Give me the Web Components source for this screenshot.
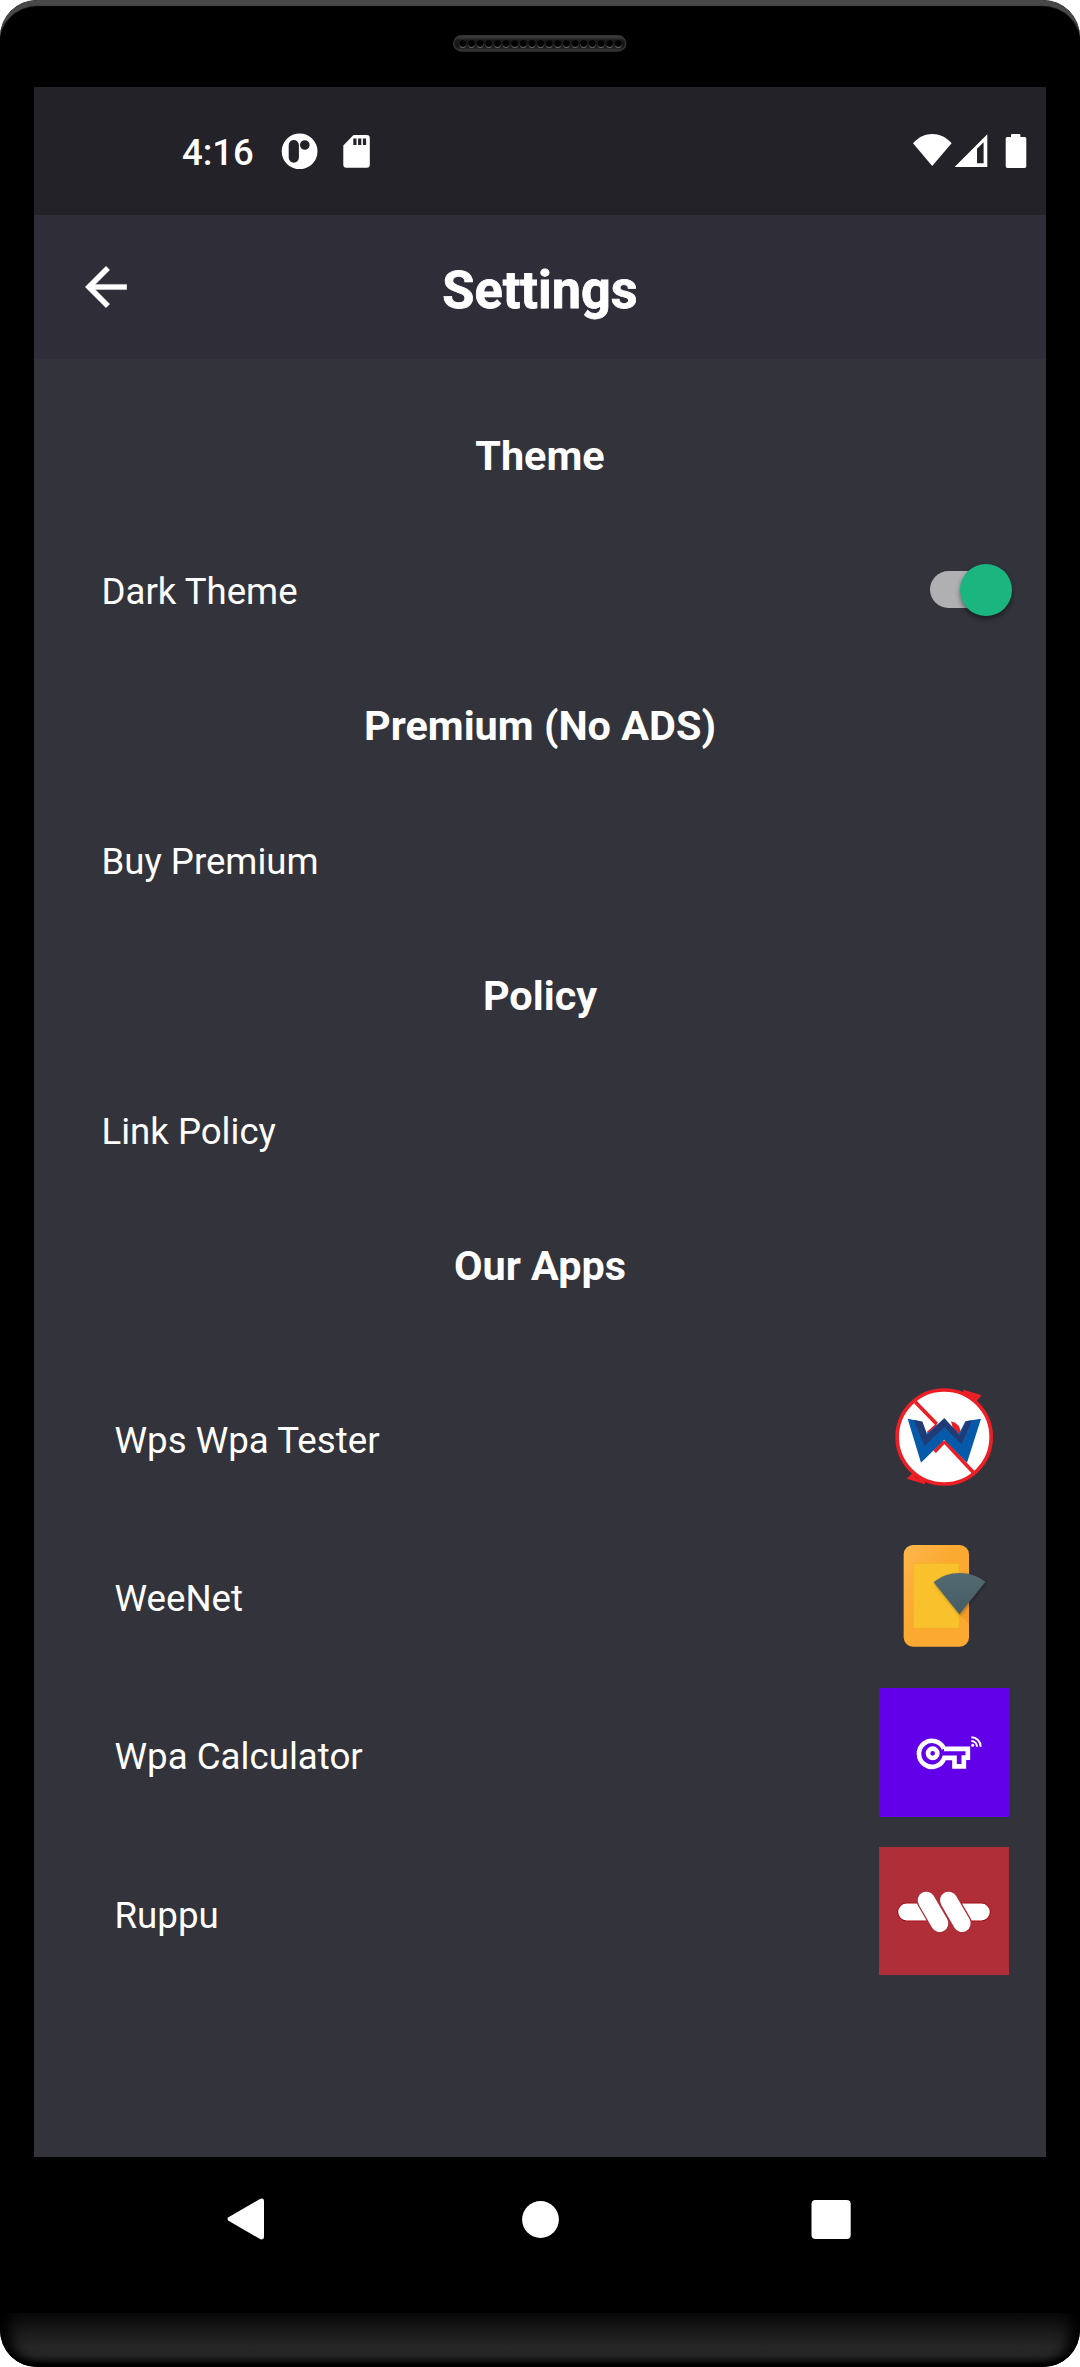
<!DOCTYPE html>
<html lang="en">
<head>
<meta charset="utf-8">
<title>Settings</title>
<style>
html,body{margin:0;padding:0;background:#fff}
body{font-family:Roboto,"Liberation Sans",sans-serif;color:#fff}
</style>
</head>
<body>
<phone-frame>
  <status-bar time="4:16"></status-bar>
  <app-bar>Settings</app-bar>
  <settings-list>
    <section-title>Theme</section-title>
    <setting-row>Dark Theme<toggle-switch slot="end"></toggle-switch></setting-row>
    <section-title>Premium (No ADS)</section-title>
    <setting-row>Buy Premium</setting-row>
    <section-title>Policy</section-title>
    <setting-row>Link Policy</setting-row>
    <section-title>Our Apps</section-title>
    <app-row icon="wps">Wps Wpa Tester</app-row>
    <app-row icon="weenet">WeeNet</app-row>
    <app-row icon="key">Wpa Calculator</app-row>
    <app-row icon="ruppu">Ruppu</app-row>
  </settings-list>
  <nav-bar slot="nav"></nav-bar>
</phone-frame>
<script>
const define=(name,html)=>customElements.define(name,class extends HTMLElement{
  constructor(){
    super();
    const root=this.attachShadow({mode:'open'});
    root.innerHTML=typeof html==='function'?html(this):html;
  }
});

const holes=Array.from({length:19},(_,i)=>{
  const x=(9.9+i*8.63).toFixed(2);
  return `<circle cx="${x}" cy="9.3" r="3.7" fill="url(#rim)"/><circle cx="${x}" cy="8.6" r="3.3" fill="#000"/>`;
}).join('');

define('phone-frame',`
<style>
:host{display:flex;flex-direction:column;width:1080px;height:2367px;background:#000;border-radius:37px;overflow:hidden}
.top{height:87px;flex:none;display:flex;justify-content:center;box-sizing:border-box;padding-top:35px;
 border-radius:37px 37px 0 0;box-shadow:inset 0 7px 1px -1px #484848}
.top svg{display:block}
.screen{height:2070px;flex:none;margin:0 34px;background:#33333c;display:flex;flex-direction:column}
.nav{height:155.7px;flex:none}
.chin{flex:1;border-radius:0 0 37px 37px;background:linear-gradient(#0c0c0c 0%,#111 18%,#1c1c1c 40%,#262626 62%,#252525 78%,#151515 90%,#000 98%);
 box-shadow:inset 16px 0 14px -6px #000,inset -16px 0 14px -6px #000,inset 0 -5px 5px -2px #000}
</style>
<div class="top"><svg width="174" height="17" viewBox="0 0 174 17">
<defs><linearGradient id="sp" x1="0" y1="0" x2="0" y2="1"><stop offset="0" stop-color="#4a4a4a"/><stop offset=".3" stop-color="#1a1a1a"/><stop offset=".7" stop-color="#151515"/><stop offset="1" stop-color="#3a3a3a"/></linearGradient>
<linearGradient id="rim" x1="0" y1="0" x2="0" y2="1"><stop offset=".3" stop-color="#1a1a1a"/><stop offset="1" stop-color="#6c6c6c"/></linearGradient></defs>
<rect x=".7" y=".7" width="172" height="15.4" rx="7.7" fill="url(#sp)" stroke="#333" stroke-width="1.4"/>${holes}</svg></div>
<div class="screen"><slot></slot></div>
<div class="nav"><slot name="nav"></slot></div>
<div class="chin"></div>`);

define('status-bar',el=>`
<style>
:host{display:flex;height:127.5px;flex:none;background:#232228;box-sizing:border-box;padding:0 19px 0 148px;align-items:flex-start}
span{font-size:36.5px;font-weight:500;line-height:44px;margin-top:44px;width:96px;white-space:nowrap}
svg{display:block;margin-top:46px;fill:#fff}
.r{margin-left:auto}
</style>
<span>${el.getAttribute('time')}</span>
<svg style="margin-left:2px" width="92" height="36" viewBox="280 133 92 36">
<path fill-rule="evenodd" d="M281.7 151.3a17.9 17.9 0 1 0 35.8 0a17.9 17.9 0 1 0-35.8 0zM293.8 140a5.1 5.1 0 0 1 5.1 5.1v12.5a5.1 5.1 0 0 1-10.2 0v-12.5a5.1 5.1 0 0 1 5.1-5.1zM300 145a4.8 4.8 0 1 0 9.6 0a4.8 4.8 0 1 0-9.6 0z"/>
<path fill-rule="evenodd" d="M353.5 135h13.3a3 3 0 0 1 3 3v26.7a3 3 0 0 1-3 3h-20.5a3 3 0 0 1-3-3V145.4zM353.3 138.4v6.5h3.2v-6.5zM358.1 138.4v6.5h3.2v-6.5zM362.9 138.4v6.5h3.2v-6.5z"/></svg>
<svg class="r" width="115" height="36" viewBox="912 133 115 36">
<path d="M932.2 166L913 143.2C924 131 940.5 131 951.6 143.2z"/>
<path fill-rule="evenodd" d="M954.6 167L987.3 134.3V167zM977 148.7V163.2H983.6V142.2z"/>
<path d="M1011 137v-2a1 1 0 0 1 1-1h7.4a1 1 0 0 1 1 1v2h4.3a1.6 1.6 0 0 1 1.6 1.6v27.6a1.8 1.8 0 0 1-1.8 1.8h-17a1.8 1.8 0 0 1-1.8-1.8v-27.6a1.6 1.6 0 0 1 1.6-1.6z"/></svg>`);

define('app-bar',`
<style>
:host{display:grid;grid-template-columns:100px 1fr 100px;height:144.5px;flex:none;background:#2e2d38}
svg{display:block;margin:51px 0 0 51px}
h1{margin:44px 0 0;font-size:52.2px;line-height:64px;font-weight:700;text-align:center;-webkit-text-stroke:.8px #fff}
</style>
<svg width="42" height="42" viewBox="3.9 4 16.2 16" fill="#fff" stroke="#fff" stroke-width=".15"><path d="M20 11H7.83l5.59-5.59L12 4l-8 8 8 8 1.41-1.41L7.83 13H20v-2z"/></svg>
<h1><slot></slot></h1>`);

define('settings-list',`<style>:host{display:flex;flex-direction:column;padding-top:30px}</style><slot></slot>`);
define('section-title',`
<style>:host{display:block;height:135px;line-height:135px;font-size:41.4px;font-weight:700;text-align:center;white-space:nowrap}</style><slot></slot>`);
define('setting-row',`
<style>:host{display:flex;align-items:center;justify-content:space-between;height:134.9px;padding:0 34px 0 67.5px;font-size:36.6px;white-space:nowrap}</style><slot></slot><slot name="end"></slot>`);
define('toggle-switch',`
<style>
:host{display:flex;align-items:center;justify-content:flex-end;width:82.5px;height:37px;box-sizing:border-box;border-radius:19px;background:linear-gradient(90deg,#b0b0b2 70%,transparent 70%);margin-top:-3px}
i{display:block;flex:none;width:52px;height:52px;border-radius:50%;background:#1bb680;box-shadow:0 3px 5px rgba(0,0,0,.45)}
</style><i></i>`);

const icons={
wps:`<svg width="130" height="129" viewBox="27 5 390 387">
<circle cx="222.5" cy="200" r="141" fill="#fff" stroke="#ed1f24" stroke-width="11"/>
<path d="M280 58L335 75L317 94L303 90L309 82L280 72zM165 342L110 325L128 308L140 311L134 320L165 331z" fill="#ed1f24"/>
<path d="M136 95L200 161M222 212L311 307M222 214L194 244" fill="none" stroke="#ed1f24" stroke-width="11"/>
<path d="M200 158L171 184L174 195H200zM243 153Q272 158 273 195L250 180z" fill="#ed1f24"/>
<path d="M113 145L157 154L171 190L223 144L267 190L286 153L333 145L291 277L223 208L153 277z" fill="#075aa9"/>
<path d="M131 148L157 154L171 196L223 144L269 196L289 153L306 150L275 222L223 170L164 227z" fill="#203b75"/>
</svg>`,
weenet:`<svg width="130" height="129" viewBox="27 -1 390 387">
<defs><linearGradient id="o" x1="0" y1="0" x2=".6" y2=".6"><stop stop-color="#ffb74d"/><stop offset=".7" stop-color="#fba930"/></linearGradient><linearGradient id="g" x1="0" y1="0" x2="0" y2="1"><stop stop-color="#546a72"/><stop offset="1" stop-color="#455c65"/></linearGradient></defs>
<rect x="101" y="44" width="196" height="305" rx="28" fill="url(#o)"/>
<rect x="131" y="100" width="136" height="193" fill="#f9c22c" stroke="#f2b52b" stroke-width="2"/>
<path d="M268 252L297 219V281z" fill="#ee9828" opacity=".7"/>
<path d="M268 252L191 156C235 119 302 119 346 155z" fill="url(#g)" style="filter:drop-shadow(2px 4px 4px rgba(0,0,0,.3))"/>
</svg>`,
key:`<svg width="130" height="129" viewBox="27 23 390 387">
<rect x="27" y="23" width="390" height="387" fill="#6200ea"/>
<g fill="none" stroke="#fff" stroke-width="14">
<path d="M222 205.5H293.5V232H281.5V258H253.5V232.5H223A39 39 0 1 1 222 205.5"/><circle cx="188" cy="219" r="14"/>
<g stroke-width="6"><path d="M304 171A28 28 0 0 1 332 199"/><path d="M304 182A17 17 0 0 1 321 199"/></g></g><circle cx="308" cy="195" r="4.5" fill="#fff"/>
</svg>`,
ruppu:`<svg width="130" height="128" viewBox="27 34 390 384">
<rect x="27" y="34" width="390" height="384" fill="#af2e38"/>
<g stroke-linecap="round" fill="none"><path d="M110 229H334" stroke="#a00008" stroke-width="56"/><path d="M110 229H334" stroke="#fff" stroke-width="51"/>
<g stroke="#af2e38" stroke-width="60"><path d="M169 194L209 263M236 194L276 263"/></g>
<g stroke="#fff" stroke-width="52"><path d="M169 194L209 263M236 194L276 263"/></g></g>
</svg>`};

define('app-row',el=>`
<style>:host{display:flex;align-items:center;justify-content:space-between;height:158.1px;box-sizing:border-box;padding:0 37px 0 80.5px;font-size:36.7px;white-space:nowrap}
:host(:first-of-type){margin-top:24px}
span{padding-top:8px}
svg{display:block}</style><span><slot></slot></span>${icons[el.getAttribute('icon')]}`);

define('nav-bar',`
<style>:host{display:flex;align-items:center;justify-content:space-between;padding:0 229px 0 227px;height:124.5px}
svg{display:block;fill:#fff}</style>
<svg width="38" height="42" viewBox="0 0 38 42"><path d="M1.5 19.2L33.5 .7Q37 0 37 3V39Q37 42 33.5 41.3L1.5 22.8Q-.5 21 1.5 19.2z"/></svg>
<svg width="41" height="37" viewBox="0 0 41 37"><circle cx="22.5" cy="18.5" r="18.4"/></svg>
<svg width="40" height="39" viewBox="0 0 40 39"><rect x=".5" width="39.2" height="39" rx="4"/></svg>`);
</script>
</body>
</html>
